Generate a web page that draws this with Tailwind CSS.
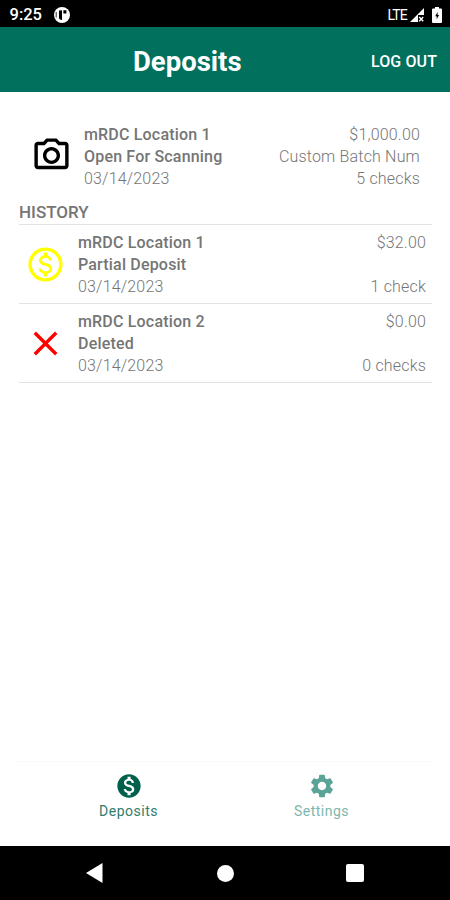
<!DOCTYPE html>
<html lang="en">
<head>
  <meta charset="UTF-8">
  <meta name="viewport" content="width=device-width, initial-scale=1.0">
  <title>Deposits</title>
  <script src="https://cdn.jsdelivr.net/npm/@tailwindcss/browser@4"></script>
  <style>
    body { font-family: Roboto, 'Liberation Sans', sans-serif; }
  </style>
</head>
<body class="bg-white">
<div class="flex h-[900px] w-[450px] flex-col overflow-hidden bg-white text-[#757575]">

  <!-- Status bar -->
  <div class="flex h-[27px] shrink-0 items-center bg-black pt-0.5 pr-2 pl-[9.5px] text-white">
    <span class="w-[44px] pt-px text-[16.5px] leading-6 font-medium">9:25</span>
    <svg class="h-4 w-4" viewBox="0 0 16 16">
      <circle cx="8" cy="8" r="8" fill="#fff"/>
      <path d="M5 3.4v7.2q0 2.4 3 2.4V3.2zM9.4 3.3h3v3.1h-3z" fill="#000"/>
      <path d="M2.2 5v5.5" stroke="#000" stroke-width=".8"/>
    </svg>
    <span class="ml-auto text-sm tracking-[-0.8px]">LTE</span>
    <svg class="ml-[3px] h-3.5 w-3.5" viewBox="0 0 14 14">
      <path d="M14 0v7H8v7H0z" fill="#fff"/>
      <path d="M9.2 9l4 4.2M13.2 9l-4 4.2" stroke="#fff" stroke-width="1.4"/>
    </svg>
    <svg class="ml-2 h-4 w-[10px]" viewBox="0 0 10 16">
      <path d="M3 0h4v1.6h2q1 0 1 1V15q0 1-1 1H1q-1 0-1-1V2.6q0-1 1-1h2z" fill="#fff"/>
      <path d="M5.6 5L3.2 9.3h1.5v3l2.4-4.3H5.6z" fill="#000"/>
    </svg>
  </div>

  <!-- App bar -->
  <header class="flex h-[65px] shrink-0 items-center justify-between bg-[#01705d] pt-1 pr-[13px] pl-[133px] text-white">
    <h1 class="text-[27.5px] leading-8 font-bold">Deposits</h1>
    <button class="text-base font-medium tracking-[0.1px]">LOG OUT</button>
  </header>

  <main class="flex-1 pt-8 pr-[18px] pl-[19px] text-base leading-[22px] tracking-[0.18px]">
    <!-- Open deposit -->
    <div class="flex px-3">
      <svg class="mt-[11px] h-[41px] w-[41px] shrink-0 text-black" viewBox="0 0 24 24" fill="currentColor">
        <path d="M20 4h-3.17L15 2H9L7.17 4H4c-1.1 0-2 .9-2 2v12c0 1.1.9 2 2 2h16c1.1 0 2-.9 2-2V6c0-1.1-.9-2-2-2zm0 14H4V6h4.05l1.83-2h4.24l1.83 2H20v12zM12 7c-2.76 0-5 2.24-5 5s2.24 5 5 5 5-2.24 5-5-2.24-5-5-5zm0 8c-1.65 0-3-1.35-3-3s1.35-3 3-3 3 1.35 3 3-1.35 3-3 3z"/>
      </svg>
      <div class="ml-3">
        <p class="font-medium">mRDC Location 1</p>
        <p class="font-medium">Open For Scanning</p>
        <p class="font-light">03/14/2023</p>
      </div>
      <div class="ml-auto text-right font-light">
        <p>$1,000.00</p>
        <p>Custom Batch Num</p>
        <p>5 checks</p>
      </div>
    </div>

    <h2 class="mt-[11px] h-[24px] border-b border-[#e2e2e2] text-[17px] font-medium tracking-normal">HISTORY</h2>

    <div class="flex h-[79px] border-b border-[#e2e2e2] px-1.5 pt-[7px]">
      <svg class="mt-3 h-[41px] w-[41px] shrink-0 text-[#ffff00]" viewBox="0 0 24 24" fill="currentColor">
        <path d="M12 2C6.48 2 2 6.48 2 12s4.48 10 10 10 10-4.48 10-10S17.52 2 12 2zm0 18c-4.41 0-8-3.59-8-8s3.59-8 8-8 8 3.59 8 8-3.59 8-8 8zm.31-8.86c-1.77-.45-2.34-.94-2.34-1.67 0-.84.79-1.43 2.1-1.43 1.38 0 1.9.66 1.94 1.64h1.71c-.05-1.34-.87-2.57-2.49-2.97V5H10.9v1.69c-1.51.32-2.72 1.3-2.72 2.81 0 1.79 1.49 2.69 3.66 3.21 1.95.46 2.34 1.15 2.34 1.87 0 .53-.39 1.39-2.1 1.39-1.6 0-2.23-.72-2.32-1.64H8.04c.1 1.7 1.36 2.66 2.86 2.97V19h2.34v-1.67c1.52-.29 2.72-1.16 2.73-2.77-.01-2.2-1.9-2.96-3.66-3.42z"/>
      </svg>
      <div class="ml-3">
        <p class="font-medium">mRDC Location 1</p>
        <p class="font-medium">Partial Deposit</p>
        <p class="font-light">03/14/2023</p>
      </div>
      <div class="ml-auto flex h-[66px] flex-col justify-between text-right font-light">
        <p>$32.00</p>
        <p>1 check</p>
      </div>
    </div>

    <div class="flex h-[79px] border-b border-[#e2e2e2] px-1.5 pt-[7px]">
      <svg class="mt-3 h-[41px] w-[41px] shrink-0 text-[#f00]" viewBox="0 0 24 24" fill="currentColor">
        <path d="M19 6.41L17.59 5 12 10.59 6.41 5 5 6.41 10.59 12 5 17.59 6.41 19 12 13.41 17.59 19 19 17.59 13.41 12z"/>
      </svg>
      <div class="ml-3">
        <p class="font-medium">mRDC Location 2</p>
        <p class="font-medium">Deleted</p>
        <p class="font-light">03/14/2023</p>
      </div>
      <div class="ml-auto flex h-[66px] flex-col justify-between text-right font-light">
        <p>$0.00</p>
        <p>0 checks</p>
      </div>
    </div>
  </main>

  <!-- Tab bar -->
  <nav class="mx-4 flex h-[85px] shrink-0 border-t border-[#f9f9f9] px-4 pt-2.5 text-sm leading-[22px] tracking-[0.5px]">
    <a href="#" class="flex flex-1 flex-col items-center text-[#01604c]">
      <svg class="h-7 w-7" viewBox="0 0 24 24" fill="currentColor">
        <path d="M12 2C6.48 2 2 6.48 2 12s4.48 10 10 10 10-4.48 10-10S17.52 2 12 2zm1.41 16.09V20h-2.67v-1.93c-1.71-.36-3.16-1.46-3.27-3.4h1.96c.1 1.05.82 1.87 2.65 1.87 1.96 0 2.4-.98 2.4-1.59 0-.83-.44-1.61-2.67-2.14-2.48-.6-4.18-1.62-4.18-3.67 0-1.72 1.39-2.84 3.11-3.21V4h2.67v1.95c1.86.45 2.79 1.86 2.85 3.39H14.3c-.05-1.11-.64-1.87-2.22-1.87-1.5 0-2.4.68-2.4 1.64 0 .84.65 1.39 2.67 1.91s4.18 1.39 4.18 3.91c-.02 1.83-1.38 2.83-3.12 3.16z"/>
      </svg>
      <span class="text-[#2f7d6d]">Deposits</span>
    </a>
    <a href="#" class="flex flex-1 flex-col items-center text-[#5aa497]">
      <svg class="h-7 w-7" viewBox="0 0 24 24" fill="currentColor">
        <path d="M19.14 12.94c.04-.3.06-.61.06-.94 0-.32-.02-.64-.07-.94l2.03-1.58c.18-.14.23-.41.12-.61l-1.92-3.32c-.12-.22-.37-.29-.59-.22l-2.39.96c-.5-.38-1.03-.7-1.62-.94l-.36-2.54c-.04-.24-.24-.41-.48-.41h-3.84c-.24 0-.43.17-.47.41l-.36 2.54c-.59.24-1.13.57-1.62.94l-2.39-.96c-.22-.08-.47 0-.59.22L2.74 8.87c-.12.21-.08.47.12.61l2.03 1.58c-.05.3-.09.63-.09.94s.02.64.07.94l-2.03 1.58c-.18.14-.23.41-.12.61l1.92 3.32c.12.22.37.29.59.22l2.39-.96c.5.38 1.03.7 1.62.94l.36 2.54c.05.24.24.41.48.41h3.84c.24 0 .44-.17.47-.41l.36-2.54c.59-.24 1.13-.56 1.62-.94l2.39.96c.22.08.47 0 .59-.22l1.92-3.32c.12-.22.07-.47-.12-.61l-2.01-1.58zM12 15.6c-1.98 0-3.6-1.62-3.6-3.6s1.62-3.6 3.6-3.6 3.6 1.62 3.6 3.6-1.62 3.6-3.6 3.6z"/>
      </svg>
      <span class="text-[#7db7ad]">Settings</span>
    </a>
  </nav>

  <!-- Android navigation buttons -->
  <div class="flex h-[54px] shrink-0 items-center justify-between bg-black px-[86px] text-white">
    <svg class="h-5 w-[17px]" viewBox="0 0 17 20"><path d="M16.5 0v20L0 10z" fill="#fff"/></svg>
    <span class="ml-0.5 h-[17px] w-[17px] rounded-full bg-white"></span>
    <span class="h-[18px] w-[18px] rounded-xs bg-white"></span>
  </div>
</div>
</body>
</html>
